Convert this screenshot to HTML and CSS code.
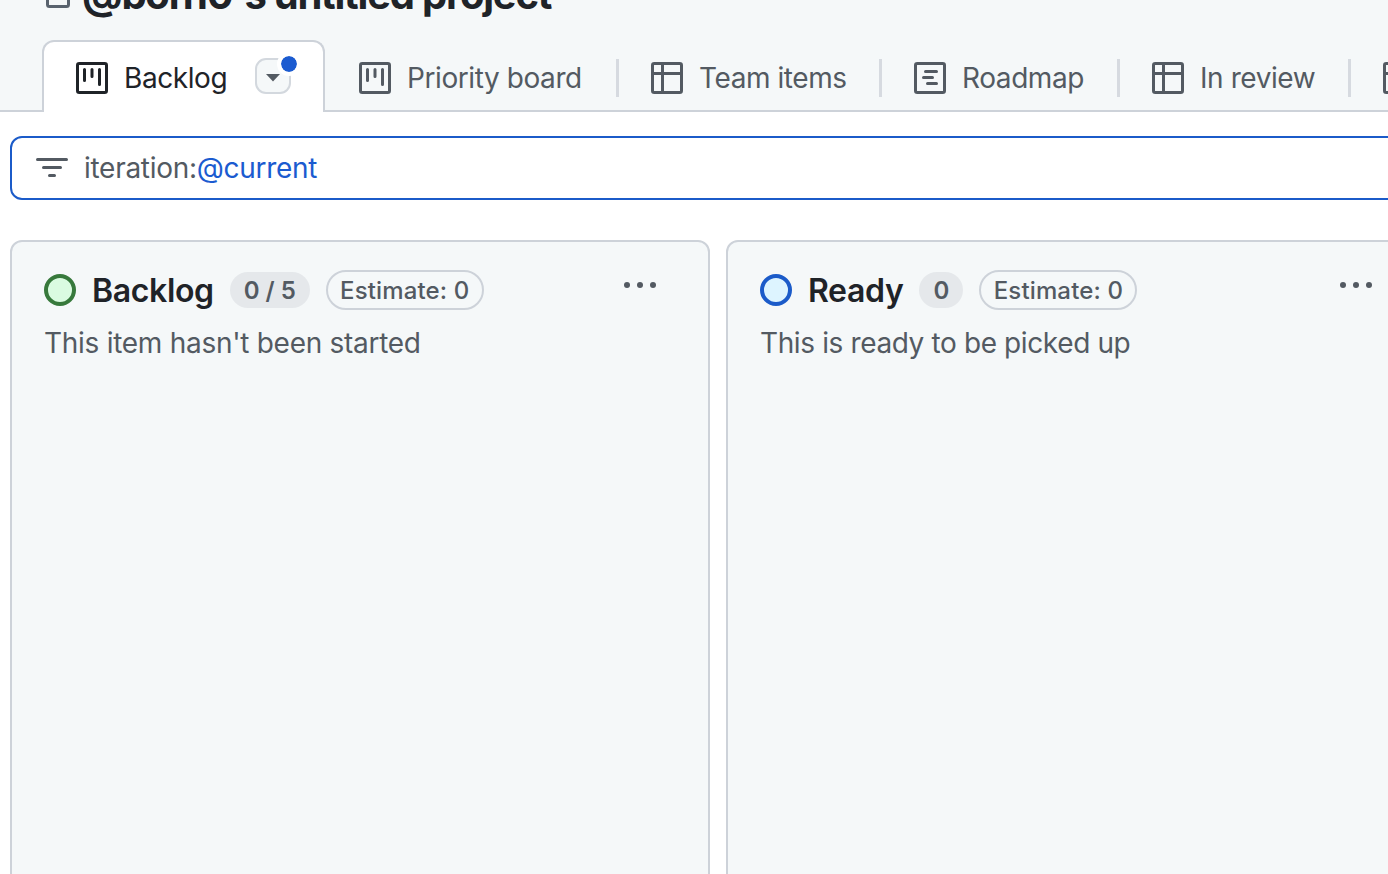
FILE: index.html
```html
<!DOCTYPE html>
<html lang="en">
<head>
    <meta charset="UTF-8">
    <meta name="viewport" content="width=device-width, initial-scale=1.0">
    <title>Backlog · @bon10's untitled project</title>
    <link rel="stylesheet" href="styles.css">
</head>
<body>
    <!-- shared icons -->
    <svg class="sprite" aria-hidden="true">
        <symbol id="icon-board" viewBox="0 0 32 32">
            <rect x="1.5" y="1.5" width="29" height="29" rx="1.8" fill="none" stroke="currentColor" stroke-width="3"/>
            <path d="M8.5 7.5v11M16 7.5v7M23.5 7.5v15" fill="none" stroke="currentColor" stroke-width="3" stroke-linecap="round"/>
        </symbol>
        <symbol id="icon-table" viewBox="0 0 32 32">
            <rect x="1.5" y="1.5" width="29" height="29" rx="1.8" fill="none" stroke="currentColor" stroke-width="3"/>
            <path d="M1 11.5h30M11.5 1v30" fill="none" stroke="currentColor" stroke-width="3"/>
        </symbol>
        <symbol id="icon-roadmap" viewBox="0 0 32 32">
            <rect x="1.5" y="1.5" width="29" height="29" rx="1.8" fill="none" stroke="currentColor" stroke-width="3"/>
            <path d="M11.5 9.5h11M9.5 15.5h9M13.5 21.5h9" fill="none" stroke="currentColor" stroke-width="3" stroke-linecap="round"/>
        </symbol>
        <symbol id="icon-kebab" viewBox="0 0 32 32">
            <circle cx="3" cy="16" r="3" fill="currentColor"/>
            <circle cx="16" cy="16" r="3" fill="currentColor"/>
            <circle cx="29" cy="16" r="3" fill="currentColor"/>
        </symbol>
    </svg>

    <header class="project-header">
        <div class="project-title">
            <svg class="lock" viewBox="0 0 24 32"><rect x="1.5" y="12" width="21" height="18.5" rx="2" fill="none" stroke="currentColor" stroke-width="3"/><path d="M6 12V8a6 6 0 0 1 12 0v4" fill="none" stroke="currentColor" stroke-width="3"/></svg>
            <h1>@bon10's untitled project</h1>
        </div>
        <nav class="tabs">
            <a class="tab tab-active">
                <svg class="icon"><use href="#icon-board"/></svg>
                <span class="label">Backlog</span>
                <button class="tab-menu">
                    <svg class="caret" viewBox="0 0 14 8"><path d="M0 0h14L7 7.5z" fill="currentColor"/></svg>
                    <span class="dot"></span>
                </button>
            </a>
            <a class="tab tab-priority">
                <svg class="icon"><use href="#icon-board"/></svg>
                <span class="label">Priority board</span>
            </a>
            <a class="tab tab-team">
                <svg class="icon"><use href="#icon-table"/></svg>
                <span class="label">Team items</span>
            </a>
            <a class="tab tab-roadmap">
                <svg class="icon"><use href="#icon-roadmap"/></svg>
                <span class="label">Roadmap</span>
            </a>
            <a class="tab tab-review">
                <svg class="icon"><use href="#icon-table"/></svg>
                <span class="label">In review</span>
            </a>
            <a class="tab tab-last">
                <svg class="icon"><use href="#icon-table"/></svg>
            </a>
        </nav>
    </header>

    <div class="filter-bar">
        <svg class="icon" viewBox="0 0 32 32"><path d="M1.5 7.5h29M7.5 15.5h17M13.5 23.5h5" fill="none" stroke="currentColor" stroke-width="3" stroke-linecap="round"/></svg>
        <span class="filter-text">iteration:<span class="filter-value">@current</span></span>
    </div>

    <main class="board">
        <section class="column">
            <div class="column-header">
                <span class="status status-green"></span>
                <h2>Backlog</h2>
                <span class="counter counter-wide">0 / 5</span>
                <span class="estimate">Estimate: 0</span>
                <svg class="icon kebab"><use href="#icon-kebab"/></svg>
            </div>
            <p>This item hasn't been started</p>
        </section>
        <section class="column">
            <div class="column-header">
                <span class="status status-blue"></span>
                <h2>Ready</h2>
                <span class="counter">0</span>
                <span class="estimate">Estimate: 0</span>
                <svg class="icon kebab"><use href="#icon-kebab"/></svg>
            </div>
            <p class="desc-ready">This is ready to be picked up</p>
        </section>
    </main>
</body>
</html>
```
FILE: styles.css
```css
* {
    box-sizing: border-box;
}
body {
    font-family: Inter, "Liberation Sans", sans-serif;
    font-size: 28px;
    margin: 0;
    height: 874px;
    overflow: hidden;
    background-color: #fff;
    color: #1f2328;
}
.sprite {
    display: none;
}
.icon {
    width: 32px;
    height: 32px;
    flex-shrink: 0;
}
.project-header {
    display: flow-root;
    height: 112px;
    background-color: #f5f8f9;
    box-shadow: inset 0 -2px #cdd2d9;
}
.project-title {
    display: flex;
    align-items: center;
    gap: 12px;
    height: 48px;
    margin-top: -29px;
    padding-left: 46px;
}
.project-title h1 {
    margin: 0;
    font-size: 40px;
    line-height: 48px;
    font-weight: 700;
    letter-spacing: -1.25px;
    white-space: nowrap;
}
.lock {
    width: 24px;
    height: 32px;
    margin-bottom: 6px;
    color: #59636e;
}
.tabs {
    display: flex;
    margin-top: 21px;
    padding-left: 42px;
    height: 72px;
}
.tab {
    display: flex;
    align-items: center;
    flex-shrink: 0;
    gap: 16px;
    padding: 4px 0 0 34px;
    color: #535a62;
    background: linear-gradient(#d6dae0, #d6dae0) right 19px / 3px 38px no-repeat;
}
.tab-active {
    width: 283px;
    padding: 2px 32px 0;
    color: #1f2328;
    background: #fff;
    border: 2px solid #cdd2d9;
    border-bottom: none;
    border-radius: 12px 12px 0 0;
}
.tab-priority {
    width: 294px;
}
.tab-team {
    width: 263px;
    padding-left: 32px;
}
.tab-roadmap {
    width: 238px;
    padding-left: 32px;
}
.tab-review {
    width: 231px;
    padding-left: 32px;
}
.tab-last {
    padding-left: 32px;
    background: none;
}
.label {
    white-space: nowrap;
    letter-spacing: -0.42px;
}
.tab-menu {
    position: relative;
    display: flex;
    align-items: center;
    justify-content: center;
    width: 36px;
    height: 36px;
    flex-shrink: 0;
    margin: -4px 0 0 auto;
    padding: 4px 0 0;
    color: #535a62;
    background: #f5f8f9;
    border: 2px solid #d3d8de;
    border-radius: 11px;
}
.caret {
    width: 14px;
    height: 8px;
}
.dot {
    position: absolute;
    top: -8px;
    right: -12px;
    width: 24px;
    height: 24px;
    background: #1b5bd0;
    background-clip: padding-box;
    border: 4px solid #fff;
    border-radius: 50%;
}
.filter-bar {
    display: flex;
    align-items: center;
    gap: 16px;
    height: 64px;
    margin: 24px -20px 40px 10px;
    padding: 0 24px;
    color: #535a62;
    border: 2px solid #1b5bc9;
    border-radius: 12px;
}
.filter-text {
    letter-spacing: -0.28px;
}
.filter-value {
    color: #1b5bd0;
}
.board {
    display: flex;
    gap: 16px;
    padding-left: 10px;
}
.column {
    width: 700px;
    height: 660px;
    flex-shrink: 0;
    padding: 28px 32px;
    background-color: #f5f8f9;
    border: 2px solid #cdd2d9;
    border-radius: 12px;
}
.column-header {
    display: flex;
    align-items: center;
    height: 40px;
    gap: 16px;
}
.column-header h2 {
    margin: 0;
    font-size: 32px;
    font-weight: 600;
    letter-spacing: -0.35px;
    white-space: nowrap;
}
.status {
    width: 32px;
    height: 32px;
    flex-shrink: 0;
    border: 4px solid;
    border-radius: 50%;
}
.status-green {
    background-color: #dafbe1;
    border-color: #37793c;
}
.status-blue {
    background-color: #ddf4ff;
    border-color: #1b5bc9;
}
.counter,
.estimate {
    display: flex;
    align-items: center;
    justify-content: center;
    flex-shrink: 0;
    font-size: 24px;
    font-weight: 500;
    color: #535a62;
    white-space: nowrap;
}
.counter {
    width: 44px;
    height: 36px;
    font-weight: 600;
    background-color: #e5e8eb;
    border-radius: 18px;
}
.counter-wide {
    width: 80px;
}
.estimate {
    width: 158px;
    height: 40px;
    letter-spacing: 0.15px;
    border: 2px solid #cdd2d9;
    border-radius: 20px;
}
.kebab {
    margin: -10px 20px 0 auto;
    color: #535a62;
}
.column p {
    margin: 15px 0 0;
    line-height: 36px;
    letter-spacing: -0.28px;
    color: #535a62;
    white-space: nowrap;
}
.column .desc-ready {
    letter-spacing: -0.38px;
}
```
